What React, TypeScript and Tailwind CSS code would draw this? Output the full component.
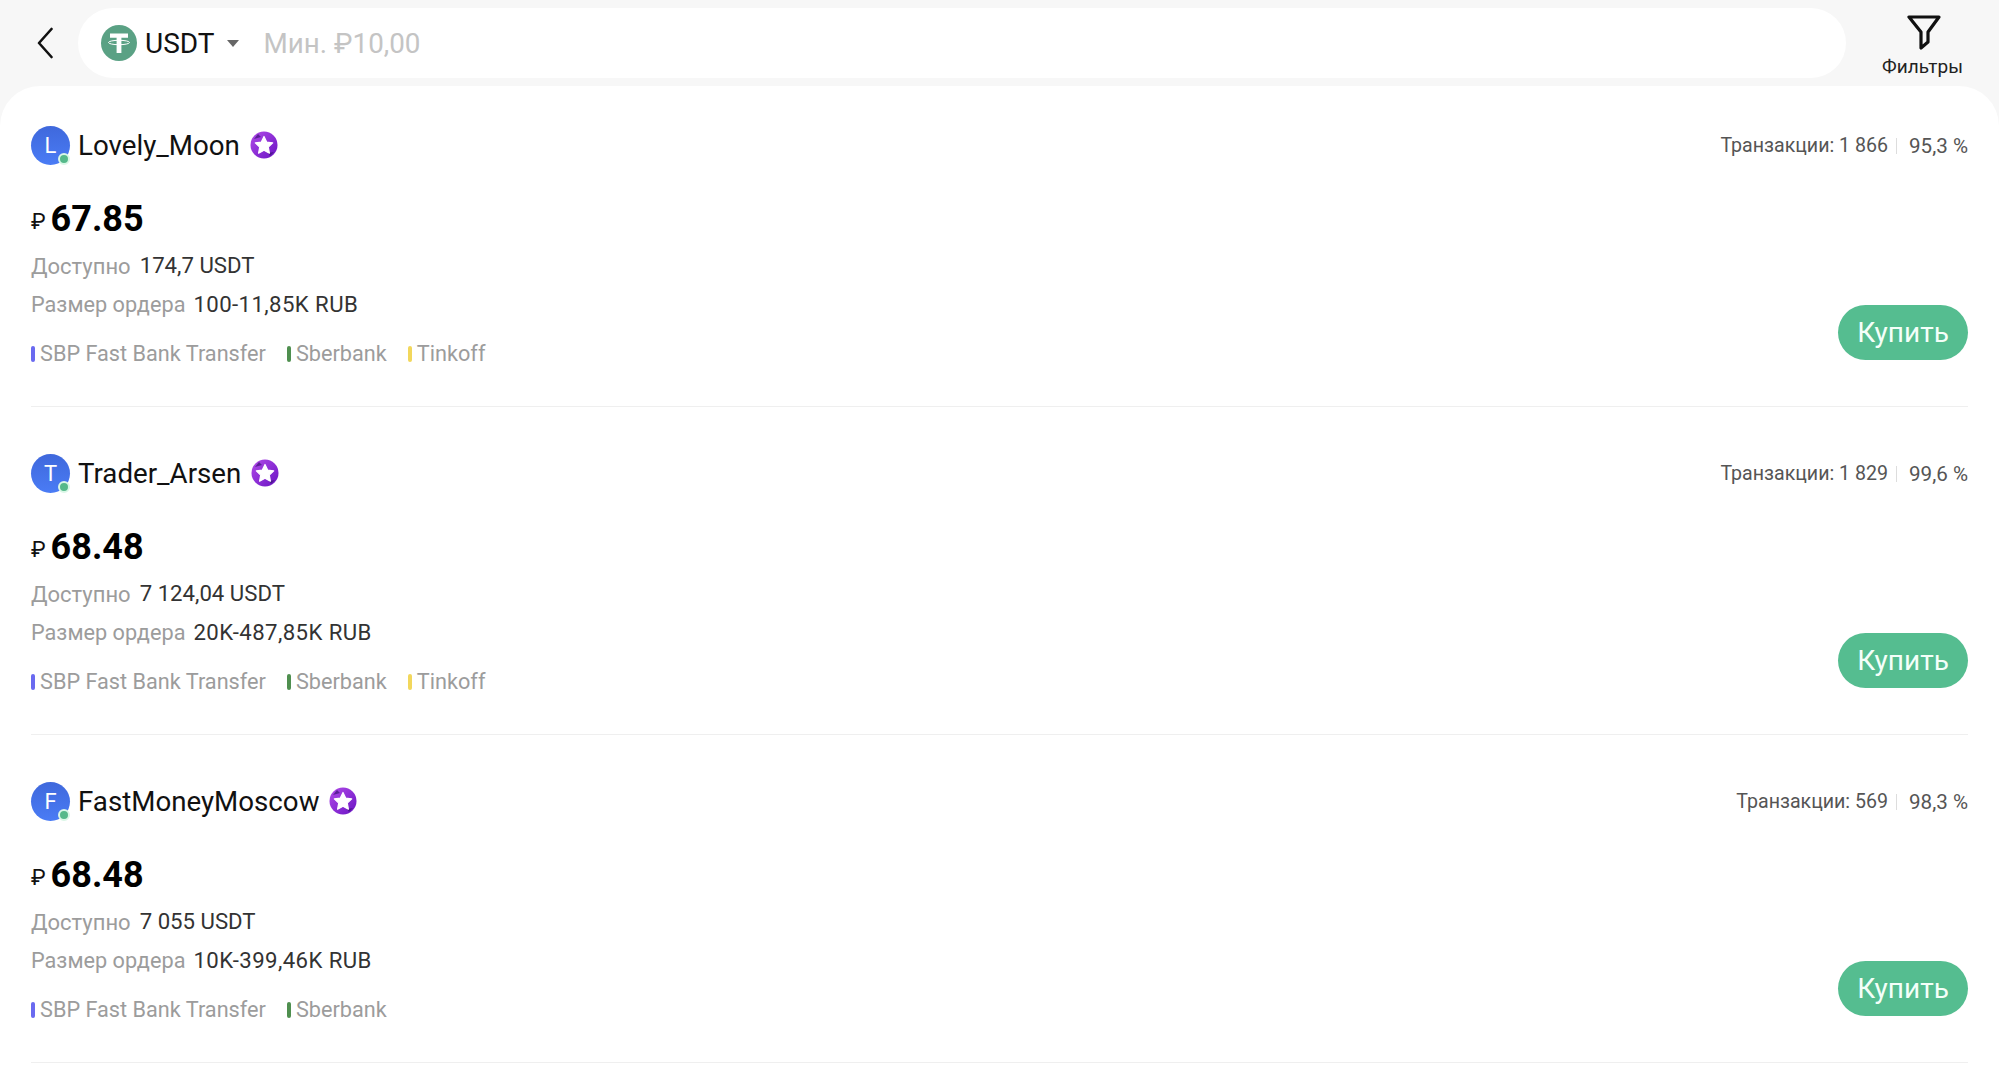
const font = "font-['Roboto','Liberation_Sans',sans-serif]";

const TetherIcon = () => (
  <svg viewBox="0 0 36 36" className="h-9 w-9 shrink-0">
    <circle cx="18" cy="18" r="18" fill="#5aa184" />
    <path d="M9 8.5h18v4.2h-6.6V28h-4.8V12.7H9z" fill="#fff" />
    <ellipse cx="18" cy="17.5" rx="10.5" ry="2.2" fill="none" stroke="#fff" strokeWidth="1" />
  </svg>
);

const StarBadge = () => (
  <svg viewBox="0 0 28 28" className="h-7 w-7 shrink-0">
    <defs>
      <linearGradient id="badge" x1="0" y1="0" x2="1" y2="1">
        <stop offset="0" stopColor="#b14be8" />
        <stop offset="1" stopColor="#6a14c4" />
      </linearGradient>
    </defs>
    <circle cx="14" cy="14" r="13.5" fill="url(#badge)" />
    <path d="M4 8l4-5 3 3zM24 21l-4 4-2-3z" fill="#3d1278" opacity="0.7" />
    <path
      d="M14 5.5l2.7 5.6 6 .8-4.4 4.2 1.1 6.1-5.4-3-5.4 3 1.1-6.1-4.4-4.2 6-.8z"
      fill="#fff"
      stroke="#fff"
      strokeWidth="1.2"
      strokeLinejoin="round"
    />
  </svg>
);

type Bank = { name: string; color: string };

const sbp: Bank = { name: 'SBP Fast Bank Transfer', color: 'bg-[#6a6af0]' };
const sber: Bank = { name: 'Sberbank', color: 'bg-[#4f8f4f]' };
const tinkoff: Bank = { name: 'Tinkoff', color: 'bg-[#f2d75c]' };

const offers = [
  { letter: 'L', name: 'Lovely_Moon', deals: '1 866', rate: '95,3 %', price: '67.85', available: '174,7 USDT', limit: '100-11,85K RUB', banks: [sbp, sber, tinkoff] },
  { letter: 'T', name: 'Trader_Arsen', deals: '1 829', rate: '99,6 %', price: '68.48', available: '7 124,04 USDT', limit: '20K-487,85K RUB', banks: [sbp, sber, tinkoff] },
  { letter: 'F', name: 'FastMoneyMoscow', deals: '569', rate: '98,3 %', price: '68.48', available: '7 055 USDT', limit: '10K-399,46K RUB', banks: [sbp, sber] },
];

const Offer = ({ offer }: { offer: (typeof offers)[number] }) => (
  <div className="mb-[46px] flex h-[282px] flex-col border-b border-[#efefef]">
    <div className="flex h-10 items-center justify-between">
      <div className="flex items-center">
        <div className="relative flex h-[39px] w-[39px] items-center justify-center rounded-full bg-gradient-to-b from-[#3f68dc] to-[#4a7cf5] text-[22px] text-white">
          {offer.letter}
          <span className="absolute bottom-0 right-0 h-[12px] w-[12px] rounded-full border-2 border-[#d9f7e6] bg-[#55b98a]" />
        </div>
        <span className="ml-2 mt-[2px] text-[27.7px] leading-10 text-[#111]">{offer.name}</span>
        <span className="ml-[10px]"><StarBadge /></span>
      </div>
      <div className="mt-[2px] flex items-center text-[#555]">
        <span className="text-[19.6px]">Транзакции: {offer.deals}</span>
        <span className="ml-2 mr-[12px] h-4 w-px bg-[#ddd]" />
        <span className="text-[20.6px]">{offer.rate}</span>
      </div>
    </div>

    <div className="mt-[32px] flex h-11 items-center">
      <span className="mr-[5px] mt-1 text-[22px] text-[#111]">₽</span>
      <span className="text-[36px] font-bold leading-none text-black">{offer.price}</span>
    </div>

    <div className="flex flex-1 items-start justify-between">
      <div className="flex flex-col">
        <div className="mt-[9px] flex h-8 items-center">
          <span className="text-[22px] text-[#9c9c9c]">Доступно</span>
          <span className="ml-[9px] text-[22.2px] text-[#333]">{offer.available}</span>
        </div>
        <div className="mt-[7px] flex h-8 items-center">
          <span className="text-[21.7px] text-[#9c9c9c]">Размер ордера</span>
          <span className="ml-2 text-[22.2px] tracking-[0.4px] text-[#333]">{offer.limit}</span>
        </div>
        <div className="mt-[17px] flex h-8 items-center gap-[21px] text-[21.7px] text-[#9c9c9c]">
          {offer.banks.map((bank) => (
            <span key={bank.name} className="flex items-center gap-[5px]">
              <span className={`h-4 w-1 rounded-full ${bank.color}`} />
              {bank.name}
            </span>
          ))}
        </div>
      </div>
      <button className="mt-[64px] flex h-[55px] w-[130px] items-center justify-center rounded-full bg-[#55bd90] text-[28px] text-[#f4fff9]">
        Купить
      </button>
    </div>
  </div>
);

export default function App() {
  return (
    <div className={`h-[1066px] overflow-hidden bg-[#f7f7f7] ${font}`}>
      <div className="flex h-[86px] items-start">
        <div className="flex h-[86px] w-[78px] items-center justify-center pl-[12px]">
          <svg viewBox="0 0 16 32" className="h-8 w-4" fill="none" stroke="#111" strokeWidth="2.6" strokeLinecap="round" strokeLinejoin="round">
            <path d="M14.5 2L2 16l12.5 14" />
          </svg>
        </div>
        <div className="mt-2 flex h-[70px] w-[1768px] items-center rounded-[35px] bg-white pl-[23px]">
          <TetherIcon />
          <span className="ml-2 mt-[2px] text-[28px] text-[#111]">USDT</span>
          <span className="ml-[12px] h-0 w-0 border-x-[6px] border-t-[7px] border-x-transparent border-t-[#666]" />
          <span className="ml-[25px] mt-[2px] text-[27.8px] text-[#c4c4c4]">Мин. ₽10,00</span>
        </div>
        <div className="flex flex-1 flex-col items-center pt-[14px]">
          <svg viewBox="0 0 36 36" className="ml-[2px] h-[36px] w-[36px]" fill="none" stroke="#111" strokeWidth="3.2" strokeLinejoin="round">
            <path d="M3 3h30L22 18v10l-7 6V18z" />
          </svg>
          <span className="mt-[5px] text-[19px] leading-6 text-[#222]">Фильтры</span>
        </div>
      </div>
      <div className="h-[980px] rounded-t-[40px] bg-white px-[31px] pt-[39px]">
        {offers.map((offer) => (
          <Offer key={offer.name} offer={offer} />
        ))}
      </div>
    </div>
  );
}
